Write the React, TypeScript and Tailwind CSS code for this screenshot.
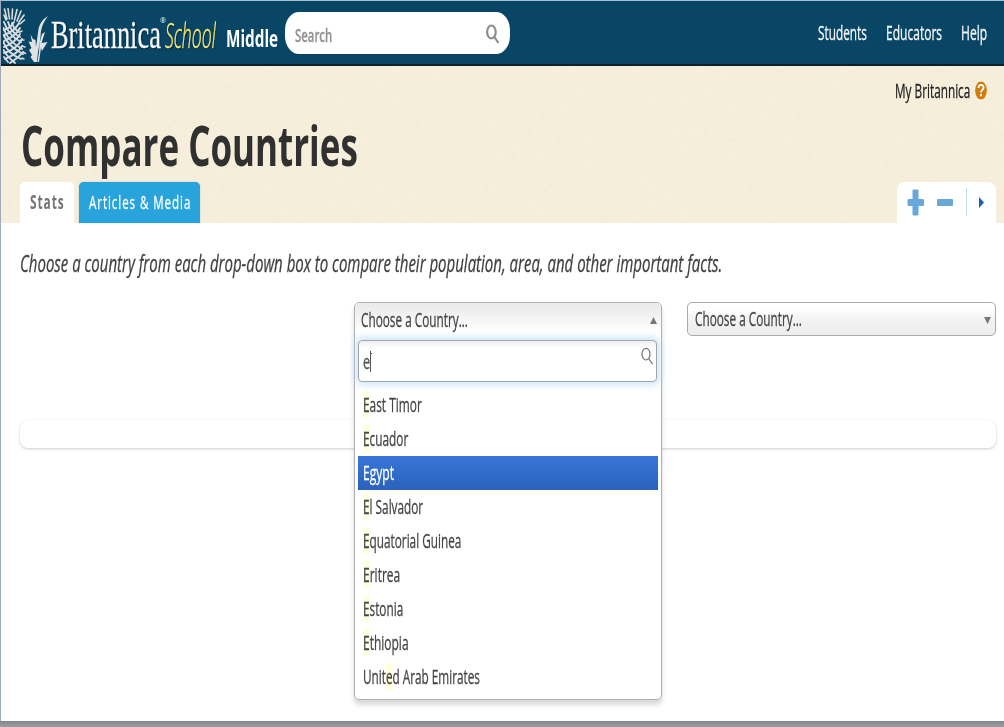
import { useLayoutEffect, useRef, useState } from "react";
import type { ReactNode } from "react";

/* Condenses a single line of text horizontally so that it fills the given width. */
function Fit({ w, className = "", children }: { w: number; className?: string; children: ReactNode }) {
  const ref = useRef<HTMLSpanElement>(null);
  const [scale, setScale] = useState(0.7);
  useLayoutEffect(() => {
    if (ref.current) setScale(w / ref.current.offsetWidth);
  }, [w]);
  return (
    <span className={"block shrink-0 whitespace-nowrap " + className} style={{ width: w }}>
      <span ref={ref} className="inline-block origin-left align-top" style={{ transform: `scaleX(${scale})` }}>
        {children}
      </span>
    </span>
  );
}

function Thistle() {
  return (
    <svg className="block h-[56px] w-[46px] shrink-0" viewBox="0 0 46 56" fill="none">
      <g stroke="#d9dcdf" strokeLinecap="round">
        <path strokeWidth="1.6" d="M1.500 1 4 11M5 .5 6.500 11M9.500 1 9 11M14 1.500 11.500 12M18 3 14 13M21 7 16 14M21.500 12 17 16M1 7 3 12" />
        <path strokeWidth="1.9" d="M1 14C4 23 10 30 18 34M5 14C7 21 11 26 17 29M9 15C10 19 13 22 16 24M0.500 20C3 29 10 36 19 41M0.500 27C4 35 10 41 20 46M0.500 34C3 42 9 47 18 51M0.500 42C3 47 7 51 12 55M1 49 5 54" />
        <path strokeWidth="1.900" d="M16 15C13 21 7 25 1 27M17 20C14 26 8 30 1 33M17 26C14 32 7 37 1 39M19 31C15 39 8 43 1 45M19 38C16 44 9 48 2 51M20 44C16 49 12 52 7 55M11 14C8 19 5 21 1 22" />
        <path strokeWidth="1.500" d="m17 24 2-1M18 32l3 0M19 38l3 1M20 44l2.500 1.500M19 50l2 1" />
      </g>
      <path fill="#dfe1e3" d="M45 8C40 11 37 15 35.500 21L34 32 33 39 32.500 32 30 31 27.500 26.500 29 34 25.500 33.500 28.500 40 26 42 29 47 27.500 49 31 54H34L35 44 37 33 38 23C39 17 42 12 45 8Z" />
      <path fill="#dfe1e3" d="M42 24 38.500 35 44.500 34 39 43 38 40 36 54H34.500L36 44 36.500 35 39 26Z" />
    </svg>
  );
}

function Magnifier({ className, width }: { className: string; width: number }) {
  return (
    <svg className={className} viewBox="0 0 12 20" fill="none" stroke="currentColor" strokeWidth={width} preserveAspectRatio="none">
      <ellipse cx="5" cy="8" rx="4" ry="6.500" />
      <path d="M7.800 13 11.500 19" />
    </svg>
  );
}

const countries: { pre: string; hit: string; post: string; w: number; active?: boolean }[] = [
  { pre: "", hit: "E", post: "ast Timor", w: 58.5 },
  { pre: "", hit: "E", post: "cuador", w: 45.5 },
  { pre: "", hit: "E", post: "gypt", w: 31, active: true },
  { pre: "", hit: "E", post: "l Salvador", w: 60.5 },
  { pre: "", hit: "E", post: "quatorial Guinea", w: 98.5 },
  { pre: "", hit: "E", post: "ritrea", w: 37 },
  { pre: "", hit: "E", post: "stonia", w: 40.5 },
  { pre: "", hit: "E", post: "thiopia", w: 45.5 },
  { pre: "Unit", hit: "e", post: "d Arab Emirates", w: 117 },
];

function Dropdown() {
  return (
    <div className="relative z-10 h-[398px] w-[308px] rounded-[5px] border-[1.5px] border-[#b0b0b0] bg-white shadow-[0_5px_5px_rgba(0,0,0,0.15)]">
      <div className="flex h-[36px] items-start justify-between rounded-t-[4px] bg-linear-to-b from-[#ebebeb] from-10% to-white to-80% pr-[4px] pl-[6px]">
        <Fit w={107} className="text-[19.500px] leading-[34px] text-[#444] [-webkit-text-stroke:0.3px]">Choose a Country...</Fit>
        <svg className="mt-[14px] h-[7px] w-[7px]" viewBox="0 0 7 7"><path fill="#777" d="M3.500 0 7 7H0Z" /></svg>
      </div>
      <div className="mt-[1px] ml-[3px] flex h-[42px] w-[299px] justify-between rounded-[4px] border-[1.500px] border-[#a5a5a5] bg-linear-to-b from-[#f0f0f0] to-white to-20% pr-[3px] pl-[4px] shadow-[0_0_7px_3px_rgba(170,215,248,0.600)]">
        <div className="flex pt-[10px]">
          <Fit w={7} className="text-[20px] leading-[22px] text-[#555] [-webkit-text-stroke:0.3px]">e</Fit>
          <svg className="h-[22px] w-[4px]" viewBox="0 0 4 22" fill="none" stroke="#555"><path d="M.5 0v21M1 2.500h1" /></svg>
        </div>
        <Magnifier className="mt-[6px] h-[18px] w-[12px] text-[#777]" width={1.2} />
      </div>
      <ul className="mt-[6px] ml-[3px] w-[300px] text-[19.5px] leading-[34px] text-[#444] [-webkit-text-stroke:0.3px]">
        {countries.map((c) => (
          <li
            key={c.pre + c.post}
            className={c.active ? "h-[34px] bg-linear-to-b from-[#3875d7] to-[#2a62bc] pl-[5px] text-white" : "h-[34px] pl-[5px]"}
          >
            <Fit w={c.w}>
              {c.pre}
              <span className={c.active ? "" : "bg-[#ffffdc]"}>{c.hit}</span>
              {c.post}
            </Fit>
          </li>
        ))}
      </ul>
    </div>
  );
}

function Header() {
  return (
    <header className="flex h-[66px] items-start border-t border-b-2 border-t-[#a9c0ce] border-b-[#102029] bg-[#094565] text-white">
      <div className="pt-[7px] pl-[2px]"><Thistle /></div>
      <Fit w={110} className="mt-[13px] ml-[2px] font-['Liberation_Serif',serif] text-[41px] leading-[40px] text-[#f4f6f7] [-webkit-text-stroke:0.3px] [text-shadow:1px_1px_2px_#001c30]">Britannica</Fit>
      <span className="-ml-[1px] mt-[16px] w-[4px] text-[7px] leading-[8px]">®</span>
      <Fit w={51} className="mt-[13px] ml-[1px] text-[34px] leading-[42px] font-light text-[#f7ea74] italic [-webkit-text-stroke:0.4px] [text-shadow:1px_1px_2px_#001c30]">
        School
      </Fit>
      <Fit w={52} className="mt-[22px] ml-[10px] text-[23.500px] leading-[30px] font-bold">Middle</Fit>
      <div className="mt-[11px] ml-[7px] flex h-[42px] w-[225px] items-center justify-between rounded-[14px/18px] bg-white pr-[11px] pl-[10px]">
        <Fit w={37} className="mt-[3px] text-[17.500px] leading-[24px] font-semibold text-[#929292] [-webkit-text-stroke:0.3px]">Search</Fit>
        <Magnifier className="mt-[2px] h-[20px] w-[13px] text-[#8c8c8c]" width={2} />
      </div>
      <nav className="mt-[17px] mr-[17px] ml-auto flex text-[20px] leading-[30px] text-[#f4f7f9] [-webkit-text-stroke:0.3px]">
        <Fit w={49}>Students</Fit>
        <Fit w={56} className="ml-[19px]">Educators</Fit>
        <Fit w={26} className="ml-[19px]">Help</Fit>
      </nav>
    </header>
  );
}

function Banner() {
  return (
    <section className="relative h-[157px] bg-[#f7f0de]">
      <svg className="pointer-events-none absolute inset-0 h-full w-full opacity-[0.04]">
        <filter id="grain">
          <feTurbulence type="fractalNoise" baseFrequency="0.25" numOctaves="2" seed="4" />
          <feColorMatrix values="0 0 0 0 .5  0 0 0 0 .35  0 0 0 0 .1  0 1.500 0 0 -.2" />
        </filter>
        <rect width="100%" height="100%" filter="url(#grain)" />
      </svg>
      <div className="relative flex h-full flex-col">
        <div className="flex justify-end pt-[9px] pr-[16px] text-[#222]">
          <Fit w={75.5} className="text-[19.500px] leading-[32px] [-webkit-text-stroke:0.3px]">My Britannica</Fit>
          <svg className="mt-[5px] ml-[4px] h-[21px] w-[14px]" viewBox="0 0 14 21">
            <ellipse cx="7" cy="10.500" rx="6.300" ry="9.600" fill="#d37b0b" stroke="#fff" strokeWidth=".8" />
            <path fill="none" stroke="#fff" strokeWidth="1.800" d="M4.500 8C4.500 3.800 9.700 4 9.600 7.600 9.500 9.800 7 9.800 7 12.500M7 14v2.300" />
          </svg>
        </div>
        <h1 className="mt-[7px] ml-[20px] text-[55px] leading-[61px] font-bold text-[#303030]">
          <Fit w={337}>Compare Countries</Fit>
        </h1>
        <div className="mt-auto flex h-[41px] items-stretch pr-[8px] pl-[19px]">
          <div className="w-[54px] rounded-t-[5px] bg-white pt-[2px] pl-[10px] text-[19px] leading-[36px] font-bold tracking-[1.500px] text-[#757575]">
            <Fit w={34.5}>Stats</Fit>
          </div>
          <div className="ml-[5px] w-[121px] rounded-t-[5px] bg-[#29a3dc] pt-[2px] pl-[10px] text-[19px] leading-[36px] tracking-[1.500px] text-white shadow-[0_0_1px_#4d86a5] [-webkit-text-stroke:0.3px]">
            <Fit w={102}>Articles &amp; Media</Fit>
          </div>
          <div className="ml-auto flex w-[99px] rounded-t-[8px] bg-white pt-[6px] pl-[10px]">
            <svg className="h-[28px] w-[80px]" viewBox="0 0 80 28">
              <path fill="#67a7da" d="M6.500 1.500h4q1 0 1 1v8.500h4q1.500 0 1.500 1v5q0 1-1.500 1h-4v8.500q0 1-1 1h-4q-1 0-1-1V18H2q-1.500 0-1.500-1v-5q0-1 1.500-1h3.500V2.500q0-1 1-1z" />
              <rect x="30" y="11" width="16" height="7" rx="1" fill="#67a7da" />
              <path stroke="#bcd9ef" d="M59.500 0v28" />
              <path fill="#1d5fbe" d="M72 9 77 14.500 72 20Z" />
            </svg>
          </div>
        </div>
      </div>
    </section>
  );
}

export default function App() {
  return (
    <div className="flex h-[727px] w-[1004px] flex-col overflow-hidden bg-[#8a8f93] font-['Open_Sans',sans-serif]">
      <div className="h-[721px] border-l border-[#9fabb8] bg-white">
        <Header />
        <Banner />
        <main>
          <p className="pt-[24px] pl-[19px] text-[24px] leading-[32px] text-[#404040] italic [-webkit-text-stroke:0.3px]">
            <Fit w={702}>Choose a country from each drop-down box to compare their population, area, and other important facts.</Fit>
          </p>
          <div className="mt-[23px] flex h-[117px] items-start pl-[353px]">
            <Dropdown />
            <div className="ml-[25px] flex h-[34px] w-[309px] items-center justify-between rounded-[5px] border-[1.500px] border-[#aaa] bg-linear-to-b from-white from-20% via-[#f3f3f3] via-50% to-[#ededed] pr-[4px] pl-[7px]">
              <Fit w={107} className="text-[19.500px] leading-[34px] text-[#444] [-webkit-text-stroke:0.3px]">Choose a Country...</Fit>
              <svg className="mt-[2px] h-[7px] w-[7px]" viewBox="0 0 7 7"><path fill="#777" d="M3.500 7 7 0H0Z" /></svg>
            </div>
          </div>
          <div className="mt-[1px] mr-[8px] ml-[19px] h-[28px] rounded-[8px] bg-white shadow-[0_1px_3px_rgba(0,0,0,0.200)]" />
        </main>
      </div>
      <div className="h-[6px] bg-linear-to-b from-[#81878c] to-[#9a9ea1]" />
    </div>
  );
}
